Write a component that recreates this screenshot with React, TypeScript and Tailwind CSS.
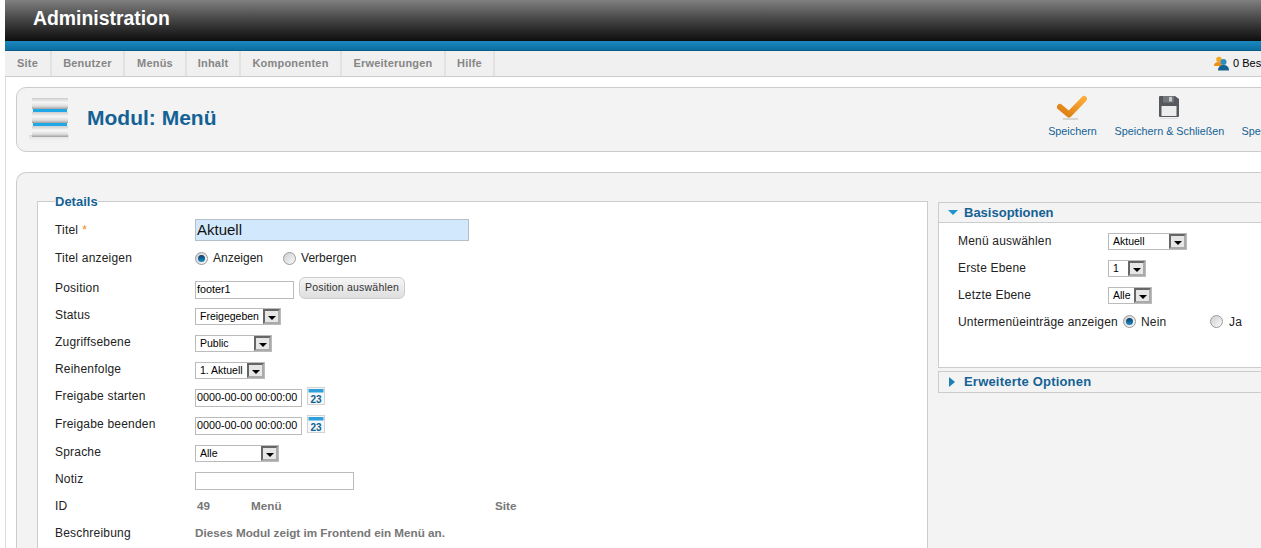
import React from "react";

const tabs = [
  { label: "Site", w: "w-[47px]" },
  { label: "Benutzer", w: "w-[73px]" },
  { label: "Menüs", w: "w-[62px]" },
  { label: "Inhalt", w: "w-[54px]" },
  { label: "Komponenten", w: "w-[101px]" },
  { label: "Erweiterungen", w: "w-[104px]" },
  { label: "Hilfe", w: "w-[49px]" },
];

const Arrow = () => (
  <span className="flex h-[15px] w-[17px] shrink-0 items-center justify-center border-[2px] border-t-[#666] border-l-[#666] border-r-[#aaa] border-b-[#aaa] bg-[#e6e6e6]">
    <span className="mt-[3px] h-0 w-0 border-x-[4px] border-t-[4px] border-x-transparent border-t-black" />
  </span>
);

const Select = ({ value, w, pl = "pl-[4px]" }: { value: string; w: string; pl?: string }) => (
  <div className={`flex h-[17px] items-center justify-between border border-[#bbb] bg-white text-[10.5px] text-black ${w} ${pl}`}>
    <span className="whitespace-nowrap">{value}</span>
    <Arrow />
  </div>
);

const Radio = ({ on }: { on?: boolean }) => (
  <span className="flex h-[13px] w-[13px] shrink-0 items-center justify-center rounded-full border border-[#9a9a9a] bg-gradient-to-br from-[#cfcfcf] to-[#fafafa]">
    {on && <span className="h-[7px] w-[7px] rounded-full bg-gradient-to-b from-[#0a3f66] to-[#1b8fc9]" />}
  </span>
);

const CalendarIcon = () => (
  <svg width="18" height="18" viewBox="0 0 18 18" className="ml-[5px] shrink-0">
    <rect x="0" y="0" width="18" height="18" fill="#d2d2d2" />
    <rect x="1" y="1" width="16" height="16" fill="#f4f8fb" />
    <rect x="1.5" y="2" width="15" height="3.5" fill="#2f9fdc" />
    <text x="9" y="15.5" textAnchor="middle" fontFamily="Liberation Sans" fontWeight="700" fontSize="10" fill="#0f6090">23</text>
  </svg>
);

const ModuleIcon = () => (
  <svg width="42" height="46" viewBox="0 0 42 46" className="shrink-0">
    <defs>
      <linearGradient id="slab" x1="0" y1="0" x2="0" y2="1">
        <stop offset="0" stopColor="#cdcdcd" />
        <stop offset="0.4" stopColor="#f7f7f7" />
        <stop offset="0.75" stopColor="#dcdcdc" />
        <stop offset="1" stopColor="#9f9f9f" />
      </linearGradient>
      <linearGradient id="shade" x1="0" y1="0" x2="0" y2="1">
        <stop offset="0" stopColor="#cfcfcf" stopOpacity="0.8" />
        <stop offset="1" stopColor="#f3f3f3" stopOpacity="0" />
      </linearGradient>
    </defs>
    <rect x="1" y="38" width="40" height="7" fill="url(#shade)" />
    <rect x="4" y="1" width="36" height="11" fill="url(#slab)" />
    <rect x="5" y="12" width="34" height="3" fill="#1fa8e8" />
    <rect x="4" y="15" width="36" height="11" fill="url(#slab)" />
    <rect x="5" y="26" width="34" height="3" fill="#1fa8e8" />
    <rect x="4" y="29" width="36" height="11" fill="url(#slab)" />
  </svg>
);

const CheckIcon = () => (
  <svg width="30" height="26" viewBox="0 0 30 26">
    <defs>
      <linearGradient id="chk" x1="0" y1="1" x2="1" y2="0">
        <stop offset="0" stopColor="#d97c10" />
        <stop offset="1" stopColor="#fdab3a" />
      </linearGradient>
    </defs>
    <rect x="6" y="23" width="15" height="2" fill="#d5d5d5" />
    <path d="M3 12 L12 19.5 L27 4" fill="none" stroke="url(#chk)" strokeWidth="6" strokeLinecap="round" strokeLinejoin="round" />
  </svg>
);

const SaveIcon = () => (
  <svg width="22" height="24" viewBox="0 0 22 24">
    <path d="M1 2 Q1 1 2 1 H17 L21 4 V21 Q21 22 20 22 H2 Q1 22 1 21 Z" fill="#55585c" />
    <rect x="5" y="1" width="11" height="6.5" fill="#74777b" />
    <rect x="11" y="2" width="3" height="4.5" fill="#c9c9c9" />
    <rect x="3.5" y="11" width="15" height="10" fill="#ececec" />
    <rect x="2" y="23" width="18" height="1" fill="#dcdcdc" />
  </svg>
);

const UsersIcon = () => (
  <svg width="15" height="15" viewBox="0 0 15 15" className="shrink-0">
    <circle cx="5" cy="3.5" r="2.8" fill="#f5a623" />
    <path d="M0 10 Q0 6 5 6 Q8 6 8 10 Z" fill="#ee8f12" />
    <circle cx="9.5" cy="6" r="3" fill="#2f8cc0" />
    <path d="M4 14.5 Q4 9 9.5 9 Q15 9 15 14.5 Z" fill="#146295" />
  </svg>
);

const Row = ({ label, h, children, req }: { label: string; h: string; children?: React.ReactNode; req?: boolean }) => (
  <div className={`flex items-center ${h}`}>
    <div className="w-[140px] shrink-0 text-[12px] tracking-[0.2px] text-[#222]">
      {label}
      {req && <span className="ml-[4px] text-[#f08a1d]">*</span>}
    </div>
    <div className="flex items-center">{children}</div>
  </div>
);

const OptRow = ({ label, children }: { label: string; children: React.ReactNode }) => (
  <div className="flex h-[27px] items-center">
    <div className="w-[150px] shrink-0 text-[12px] tracking-[0.2px] text-[#222]">{label}</div>
    <div className="mt-[2px]">{children}</div>
  </div>
);

const inputCls = "flex h-[18px] items-center border border-[#bbb] bg-white pl-[1px] text-[10.8px] text-black";

export default function App() {
  return (
    <div className="h-[548px] w-[1261px] overflow-hidden bg-white pl-[5px] font-['Liberation_Sans',Arial,sans-serif]">
      <div className="h-[41px] bg-gradient-to-b from-[#808080] to-[#0f0f0f] pl-[28px] pt-[6px] text-[19.4px] font-bold leading-[24px] text-white">
        Administration
      </div>
      <div className="h-[10px] border-b border-[#0a5c88] bg-gradient-to-b from-[#1a88c0] to-[#0b6fa1]" />

      <div className="flex h-[26px] items-stretch border-b border-[#ccc] bg-[#f0f0f0]">
        {tabs.map((t) => (
          <div key={t.label} className={`flex items-center justify-center border-r-2 border-[#e2e2e2] text-[11px] font-bold tracking-[0.2px] text-[#868686] ${t.w}`}>
            {t.label}
          </div>
        ))}
        <div className="ml-auto flex items-center gap-[4px] pr-0">
          <UsersIcon />
          <span className="w-[28px] overflow-hidden whitespace-nowrap text-[11px] text-black">0 Besucher</span>
        </div>
      </div>

      <div className="h-[472px] w-[1300px] border-l border-[#ddd] pl-[10px] pt-[10px]">
        <div className="flex h-[65px] items-center rounded-l-[10px] border border-[#ccc] bg-[#f3f3f3] pl-[11px]">
          <ModuleIcon />
          <h1 className="mb-[4px] ml-[17px] text-[21px] font-bold text-[#146295]">Modul: Menü</h1>
          <div className="ml-[831px] flex w-[240px] shrink-0 items-start pb-[4px] text-[10.8px] text-[#146295]">
            <div className="flex w-[50px] shrink-0 flex-col items-center">
              <CheckIcon />
              <span className="mt-[2px] whitespace-nowrap">Speichern</span>
            </div>
            <div className="ml-[17px] flex w-[110px] shrink-0 flex-col items-center">
              <SaveIcon />
              <span className="mt-[4px] whitespace-nowrap">Speichern &amp; Schließen</span>
            </div>
            <div className="ml-[17px] mt-[28px] whitespace-nowrap">Speichern &amp; Neu</div>
          </div>
        </div>

        <div className="mt-[20px] flex h-[400px] items-start rounded-tl-[10px] border-l border-t border-[#ccc] bg-[#f3f3f3] pl-[20px] pt-[21px]">
          <fieldset className="h-[400px] w-[891px] shrink-0 border border-[#ccc] bg-white pl-[17px]">
            <legend className="ml-[0px] text-[13px] font-bold leading-[15px] text-[#146295]">Details</legend>
            <div className="pt-[8px]">
              <Row label="Titel" req h="h-[26px]">
                <div className="flex h-[22px] w-[274px] items-center border border-[#b5bfc8] bg-[#d2e9fd] pl-[1px] text-[15px] text-[#111]">Aktuell</div>
              </Row>
              <Row label="Titel anzeigen" h="h-[30px]">
                <Radio on />
                <span className="ml-[5px] text-[12px] text-[#222]">Anzeigen</span>
                <span className="ml-[20px]"><Radio /></span>
                <span className="ml-[5px] text-[12px] text-[#222]">Verbergen</span>
              </Row>
              <Row label="Position" h="h-[30px]">
                <div className={`${inputCls} mt-[3px] w-[99px]`}>footer1</div>
                <div className="ml-[5px] flex h-[22px] w-[106px] items-center justify-center rounded-[6px] border border-[#ccc] bg-gradient-to-b from-[#f6f6f6] to-[#dedede] text-[10.5px] tracking-[0.2px] text-[#333]">
                  Position auswählen
                </div>
              </Row>
              <Row label="Status" h="h-[24px]">
                <div className="mt-[3px]"><Select value="Freigegeben" w="w-[86px]" /></div>
              </Row>
              <Row label="Zugriffsebene" h="h-[30px]">
                <div className="mt-[3px]"><Select value="Public" w="w-[77px]" /></div>
              </Row>
              <Row label="Reihenfolge" h="h-[24px]">
                <div className="mt-[3px]"><Select value="1. Aktuell" w="w-[70px]" /></div>
              </Row>
              <Row label="Freigabe starten" h="h-[30px]">
                <div className={`${inputCls} mt-[3px] w-[107px]`}>0000-00-00 00:00:00</div>
                <CalendarIcon />
              </Row>
              <Row label="Freigabe beenden" h="h-[26px]">
                <div className={`${inputCls} mt-[3px] w-[107px]`}>0000-00-00 00:00:00</div>
                <CalendarIcon />
              </Row>
              <Row label="Sprache" h="h-[30px]">
                <div className="mt-[3px]"><Select value="Alle" w="w-[84px]" /></div>
              </Row>
              <Row label="Notiz" h="h-[24px]">
                <div className={`${inputCls} mt-[3px] w-[159px]`} />
              </Row>
              <Row label="ID" h="h-[30px]">
                <div className="flex text-[11.7px] font-bold text-[#777]">
                  <span className="ml-[2px] w-[54px]">49</span>
                  <span className="w-[244px]">Menü</span>
                  <span>Site</span>
                </div>
              </Row>
              <Row label="Beschreibung" h="h-[24px]">
                <span className="text-[11.7px] font-bold text-[#777]">Dieses Modul zeigt im Frontend ein Menü an.</span>
              </Row>
            </div>
          </fieldset>

          <div className="ml-[10px] mt-[8px] w-[340px] shrink-0">
            <div className="border border-[#ccc] bg-white">
              <div className="flex h-[20px] items-center border-b border-[#ccc] bg-[#f3f3f3] pl-[9px]">
                <span className="h-0 w-0 border-x-[5px] border-t-[5px] border-x-transparent border-t-[#1f95cf]" />
                <span className="ml-[6px] text-[13px] font-bold text-[#146295]">Basisoptionen</span>
              </div>
              <div className="h-[144px] pl-[19px] pt-[4px]">
                <OptRow label="Menü auswählen"><Select value="Aktuell" w="w-[79px]" /></OptRow>
                <OptRow label="Erste Ebene"><Select value="1" w="w-[38px]" /></OptRow>
                <OptRow label="Letzte Ebene"><Select value="Alle" w="w-[44px]" /></OptRow>
                <div className="flex h-[27px] items-center text-[12px] tracking-[0.2px] text-[#222]">
                  <span className="w-[165px] shrink-0 whitespace-nowrap">Untermenüeinträge anzeigen</span>
                  <Radio on />
                  <span className="ml-[5px] w-[69px]">Nein</span>
                  <Radio />
                  <span className="ml-[6px]">Ja</span>
                </div>
              </div>
            </div>
            <div className="mt-[3px] flex h-[22px] items-center border border-[#ccc] bg-[#f3f3f3] pl-[10px]">
              <span className="h-0 w-0 border-y-[5px] border-l-[6px] border-y-transparent border-l-[#1f7fb5]" />
              <span className="ml-[9px] text-[13px] font-bold tracking-[0.2px] text-[#146295]">Erweiterte Optionen</span>
            </div>
          </div>
        </div>
      </div>
    </div>
  );
}
